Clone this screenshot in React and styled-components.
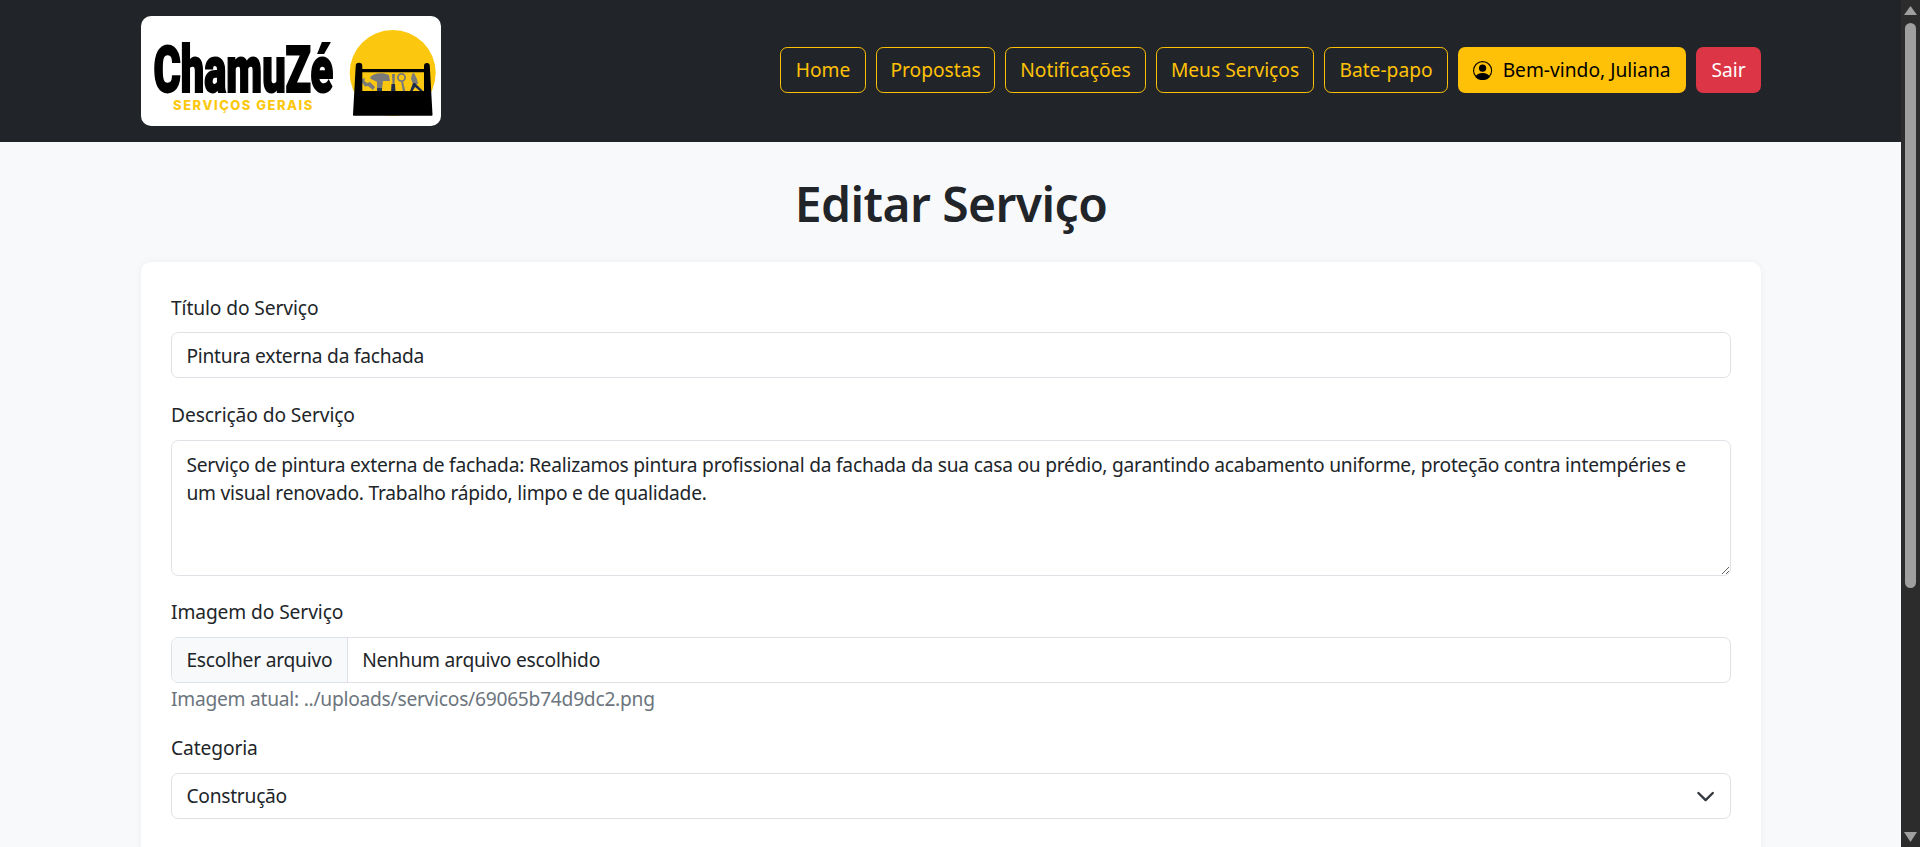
import React from "react";
import styled, { createGlobalStyle } from "styled-components";
import { BsPersonCircle } from "react-icons/bs";

const GlobalStyle = createGlobalStyle`
  * {
    box-sizing: border-box;
  }
  html,
  body {
    margin: 0;
    height: 100%;
    overflow: hidden;
  }
  body {
    font-family: "Noto Sans", "Open Sans", sans-serif;
    font-size: 19.2px;
    line-height: 1.5;
    color: #212529;
    background-color: #f8f9fa;
  }
`;

const Page = styled.div`
  display: flex;
  height: 100vh;
`;

const Content = styled.div`
  flex: 1;
  min-width: 0;
  overflow: hidden;
  background-color: #f8f9fa;
`;

const ScrollBar = styled.div`
  flex: none;
  display: flex;
  flex-direction: column;
  align-items: center;
  width: 19px;
  padding: 6px 0 5px;
  background-color: #2c2c2c;
`;

const ScrollThumb = styled.div`
  width: 11px;
  height: 565px;
  margin-top: 8px;
  margin-bottom: auto;
  background-color: #9f9f9f;
  border-radius: 6px;
`;

const Header = styled.header`
  display: flex;
  align-items: flex-start;
  justify-content: space-between;
  height: 142px;
  padding: 16px 140px 0 141px;
  background-color: #212529;
`;

const Logo = styled.a`
  display: flex;
  align-items: flex-start;
  width: 300px;
  height: 110px;
  padding: 9px 0 0 12px;
  background-color: #fff;
  border-radius: 10px;
  overflow: hidden;
`;

const LogoText = styled.div`
  flex: none;
  display: flex;
  flex-direction: column;
  align-items: center;
  width: 181px;
  padding-top: 21px;
`;

const LogoName = styled.span`
  display: block;
  font-family: Roboto, "Liberation Sans", sans-serif;
  font-size: 64px;
  font-weight: 900;
  line-height: 50px;
  color: #000;
  white-space: nowrap;
  -webkit-text-stroke: 2px #000;
  transform: scaleX(0.65);
`;

const LogoTagline = styled.span`
  display: block;
  margin-top: 2px;
  font-family: Inter, sans-serif;
  font-size: 13px;
  font-weight: 800;
  line-height: 14px;
  letter-spacing: 1.5px;
  color: #fcc80f;
  white-space: nowrap;
`;

const LogoIcon = styled.svg`
  flex: none;
  margin-left: 11px;
  width: 95px;
  height: 95px;
`;

const Nav = styled.nav`
  display: flex;
  gap: 10px;
  margin-top: 31px;
`;

const NavButton = styled.a`
  display: inline-flex;
  align-items: center;
  justify-content: center;
  gap: 10px;
  width: ${(p) => p.$width}px;
  height: 46px;
  padding-top: 1.5px;
  border: 1.2px solid ${(p) => (p.$variant === "outline" ? "#ffc107" : "transparent")};
  border-radius: 7.2px;
  white-space: nowrap;
  color: ${(p) => (p.$variant === "danger" ? "#fff" : p.$variant === "warning" ? "#000" : "#ffc107")};
  background-color: ${(p) =>
    p.$variant === "danger" ? "#dc3545" : p.$variant === "warning" ? "#ffc107" : "transparent"};
`;

const Main = styled.main`
  padding: 0 140px 0 141px;
`;

const Title = styled.h1`
  margin: 0;
  padding: 33px 0 29px;
  font-size: 48px;
  font-weight: 600;
  line-height: 1.2;
  letter-spacing: -0.55px;
  text-align: center;
`;

const Card = styled.form`
  min-height: 640px;
  padding: 32.5px 30px 30px;
  background-color: #fff;
  border-radius: 10px;
  box-shadow: 0 0 8px rgba(0, 0, 0, 0.05);
`;

const Field = styled.div`
  margin-bottom: 22.8px;
`;

const Label = styled.label`
  display: block;
  margin-bottom: 9.6px;
  letter-spacing: -0.1px;
`;

const controlBase = `
  display: block;
  width: 100%;
  border: 1.2px solid #dee2e6;
  border-radius: 7.2px;
  font: inherit;
  letter-spacing: -0.23px;
  color: #212529;
  background-color: #fff;
  outline: none;
`;

const Input = styled.input`
  ${controlBase}
  height: 46px;
  padding: 1px 14.4px 0;
`;

const Textarea = styled.textarea`
  ${controlBase}
  height: 136px;
  padding: 10px 14.4px 4px;
  resize: vertical;
`;

const FileBox = styled.div`
  display: flex;
  align-items: center;
  height: 46px;
  border: 1.2px solid #dee2e6;
  border-radius: 7.2px;
  overflow: hidden;
  letter-spacing: -0.22px;
`;

const FileButton = styled.span`
  display: flex;
  align-items: center;
  height: 100%;
  padding: 1px 14.4px 0;
  background-color: #f8f9fa;
  border-right: 1.2px solid #dee2e6;
`;

const FileName = styled.span`
  padding: 1px 14.4px 0;
`;

const Hint = styled.div`
  padding-top: 4px;
  line-height: 24.8px;
  letter-spacing: -0.25px;
  color: #6c757d;
`;

const SelectBox = styled.div`
  display: flex;
  align-items: center;
  justify-content: space-between;
  height: 46px;
  padding: 1px 14.4px 0;
  border: 1.2px solid #dee2e6;
  border-radius: 7.2px;
  letter-spacing: -0.25px;
`;

const navItems = [
  { label: "Home", width: 86 },
  { label: "Propostas", width: 119 },
  { label: "Notificações", width: 141 },
  { label: "Meus Serviços", width: 158 },
  { label: "Bate-papo", width: 124 },
];

function ToolboxIcon() {
  return (
    <LogoIcon viewBox="0 0 95 95">
      <circle cx="47.7" cy="48" r="43" fill="#fcc80f" />
      {/* chave inglesa */}
      <path d="M17 54l3-1-.5 3 2.500 2 3-1 5 5-2 3-5-4-3 .5-3-4z" fill="#7a7a7a" />
      {/* martelo */}
      <path d="M25 53c2-5 13-6 19-3l1 6-7 0-1 8-5 0 0-7c-3-2-5-2-7-4z" fill="#7a7a7a" />
      <path d="M32 63h5v4h-5z" fill="#2b3a55" />
      {/* chave de fenda */}
      <path d="M47 49h3l-.5 10h-2z" fill="#7a7a7a" />
      <path d="M46.500 59h3.500l.5 8h-4.500z" fill="#1f2d4d" />
      {/* chave de boca */}
      <circle cx="56.500" cy="52.500" r="3.600" fill="none" stroke="#7a7a7a" strokeWidth="1.800" />
      <path d="M56 56.500h2l2.500 10.500h-2.500z" fill="#7a7a7a" />
      {/* alicate */}
      <path d="M67 49l2-1 3 6 1 5-5 0-2-5z" fill="#7a7a7a" />
      <path d="M68 58l2 0 8 8-2 1-6-5-3 5-2-1z" fill="#1f2d4d" />
      {/* caixa */}
      <path
        d="M10.700 41a3.300 3.300 0 0 1 6.600 0v3h61.700v-3a2.900 2.900 0 0 1 5.800 0l2.700 48.500a1 1 0 0 1-1 1.200H9a1 1 0 0 1-1-1.200z M17.300 47.300V66H79V47.300z"
        fill="#000"
        fillRule="evenodd"
      />
    </LogoIcon>
  );
}

function App() {
  return (
    <Page>
      <GlobalStyle />
      <Content>
        <Header>
          <Logo>
            <LogoText>
              <LogoName>ChamuZé</LogoName>
              <LogoTagline>SERVIÇOS GERAIS</LogoTagline>
            </LogoText>
            <ToolboxIcon />
          </Logo>
          <Nav>
            {navItems.map((item) => (
              <NavButton key={item.label} $variant="outline" $width={item.width}>
                {item.label}
              </NavButton>
            ))}
            <NavButton $variant="warning" $width={228}>
              <BsPersonCircle size={19.2} />
              Bem-vindo, Juliana
            </NavButton>
            <NavButton $variant="danger" $width={65}>
              Sair
            </NavButton>
          </Nav>
        </Header>
        <Main>
          <Title>Editar Serviço</Title>
          <Card>
            <Field>
              <Label>Título do Serviço</Label>
              <Input defaultValue="Pintura externa da fachada" />
            </Field>
            <Field>
              <Label>Descrição do Serviço</Label>
              <Textarea defaultValue="Serviço de pintura externa de fachada: Realizamos pintura profissional da fachada da sua casa ou prédio, garantindo acabamento uniforme, proteção contra intempéries e um visual renovado. Trabalho rápido, limpo e de qualidade." />
            </Field>
            <Field>
              <Label>Imagem do Serviço</Label>
              <FileBox>
                <FileButton>Escolher arquivo</FileButton>
                <FileName>Nenhum arquivo escolhido</FileName>
              </FileBox>
              <Hint>Imagem atual: ../uploads/servicos/69065b74d9dc2.png</Hint>
            </Field>
            <Field>
              <Label>Categoria</Label>
              <SelectBox>
                Construção
                <svg width="19.2" height="19.2" viewBox="0 0 16 16" fill="none">
                  <path d="m2 5 6 6 6-6" stroke="#343a40" strokeWidth="2" strokeLinecap="round" strokeLinejoin="round" />
                </svg>
              </SelectBox>
            </Field>
          </Card>
        </Main>
      </Content>
      <ScrollBar>
        <svg width="13" height="9" viewBox="0 0 13 9">
          <path d="M6.500 0 13 9H0z" fill="#9f9f9f" />
        </svg>
        <ScrollThumb />
        <svg width="13" height="10" viewBox="0 0 13 10">
          <path d="M6.500 10 13 0H0z" fill="#9f9f9f" />
        </svg>
      </ScrollBar>
    </Page>
  );
}

export default App;
